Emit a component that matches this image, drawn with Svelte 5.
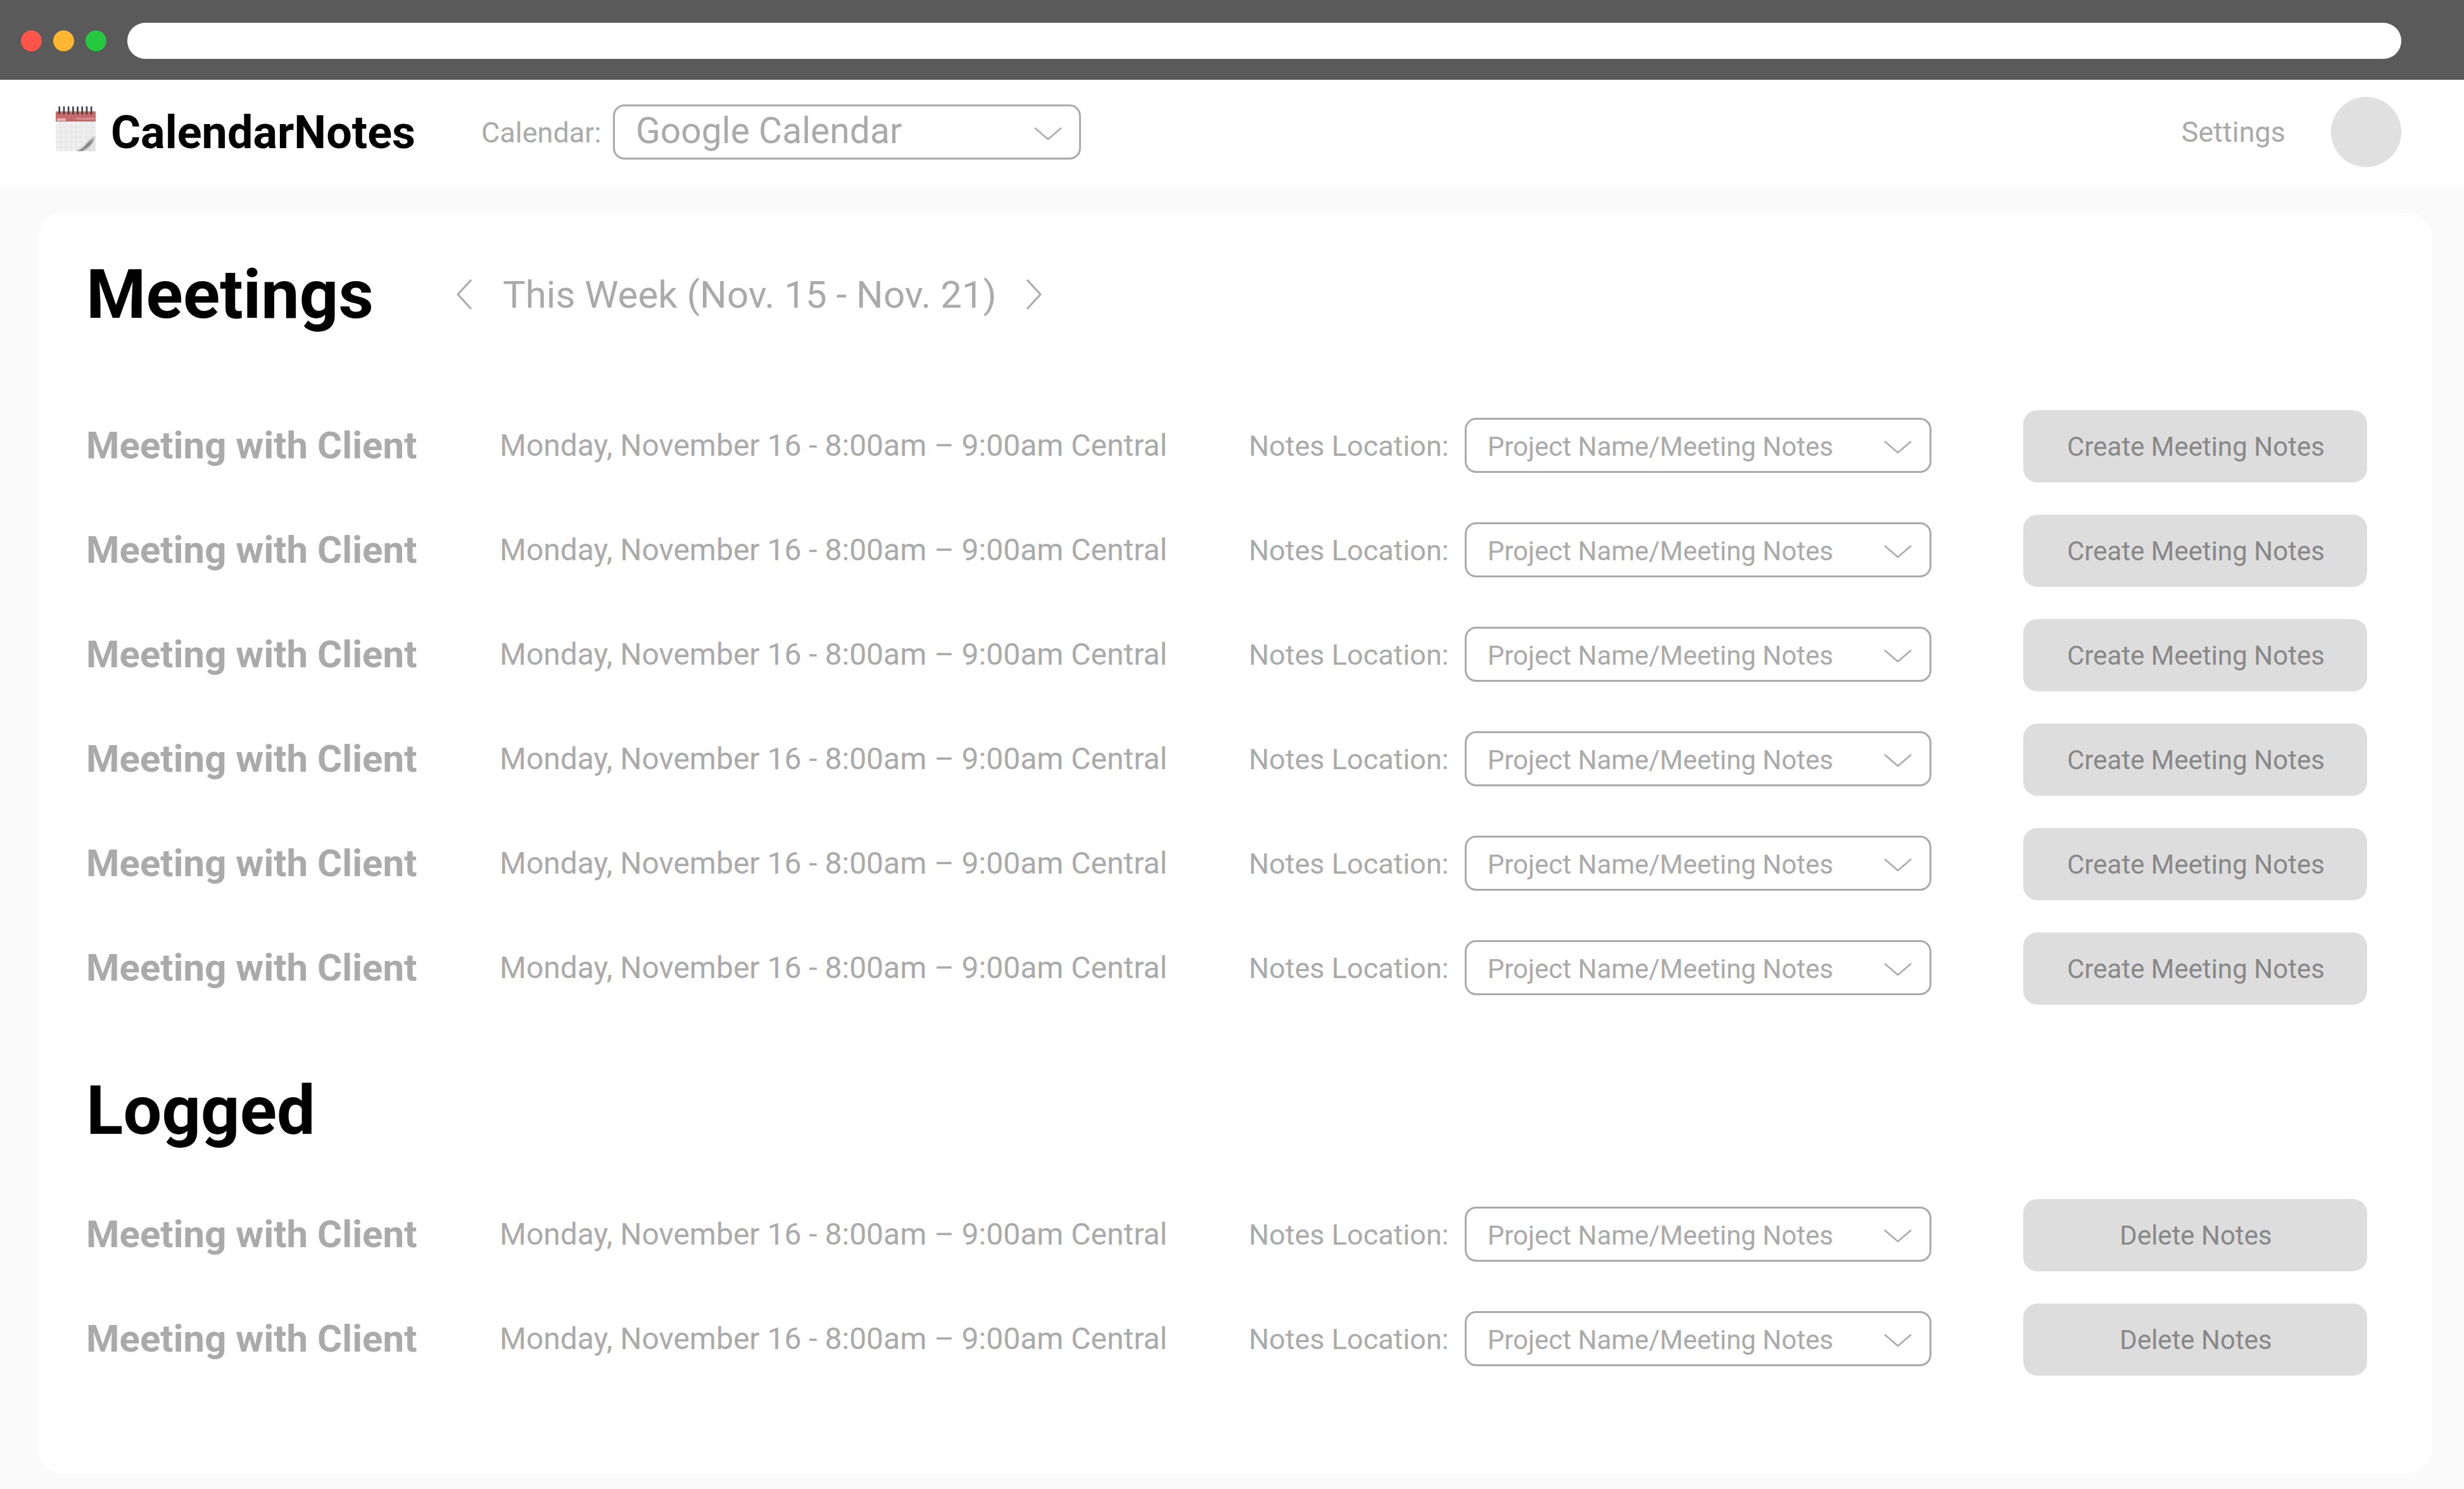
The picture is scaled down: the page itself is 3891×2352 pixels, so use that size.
<script>
  const meetings = Array.from({ length: 6 }, () => 'Create Meeting Notes');
  const logged = Array.from({ length: 2 }, () => 'Delete Notes');
  const rings = [0, 1, 2, 3, 4, 5, 6, 7];
  const gridX = [8, 16, 24, 32, 40, 48, 56];
  const gridY = [32, 40, 48, 56, 64];
</script>

{#snippet chevron(cls)}
  <svg class={cls} viewBox="0 0 44 20" fill="none" aria-hidden="true">
    <path d="M1 1 L22 19 L43 1" />
  </svg>
{/snippet}

{#snippet row(action)}
  <div class="row">
    <div class="name">Meeting with Client</div>
    <div class="when">Monday, November 16 - 8:00am – 9:00am Central</div>
    <div class="loc">Notes Location:</div>
    <div class="picker">
      <span>Project Name/Meeting Notes</span>
      {@render chevron('chev')}
    </div>
    <button class="action">{action}</button>
  </div>
{/snippet}

<div class="page">
  <div class="chrome">
    <i class="dot red"></i>
    <i class="dot yellow"></i>
    <i class="dot green"></i>
    <div class="address"></div>
  </div>

  <header class="top">
    <svg class="logo" viewBox="0 0 63 71" aria-hidden="true">
      <defs>
        <linearGradient id="curl" x1="0.3" y1="0.3" x2="0.75" y2="0.8">
          <stop offset="0" stop-color="#ffffff" />
          <stop offset="0.4" stop-color="#b5b5b5" />
          <stop offset="0.6" stop-color="#6e6e6e" />
          <stop offset="1" stop-color="#d8d8d8" />
        </linearGradient>
        <filter id="soft" x="-10%" y="-10%" width="120%" height="120%">
          <feGaussianBlur stdDeviation="1" />
        </filter>
      </defs>
      <rect x="0" y="24" width="63" height="47" fill="#efefef" />
      {#each gridX as x}<rect {x} y="24" width="1" height="47" fill="#e2e2e2" />{/each}
      {#each gridY as y}<rect x="0" {y} width="63" height="1" fill="#e2e2e2" />{/each}
      <rect x="0" y="8" width="63" height="16" fill="#c76a6a" />
      <rect x="2" y="19" width="14" height="4" fill="#e6b3b3" />
      <rect x="32" y="18" width="30" height="3" fill="#d48c8c" />
      {#each rings as r}
        <rect x={4.5 + r * 7.2} y="0" width="2.6" height="13" rx="1.2" fill="#3c3c3c" />
      {/each}
      <path d="M63 46 L63 71 L30 71 C42 67 46 62 50 56 C54 51 58 48 63 46 Z" fill="#e4e4e4" />
      <path d="M63 47 C56 49 52 54 47 61 C43 66 38 69 32 71 L42 71 C49 68 54 64 57 58 C59 54 61 51 63 47 Z" fill="url(#curl)" filter="url(#soft)" />
    </svg>
    <div class="brand">CalendarNotes</div>
    <label class="cal-label" for="cal">Calendar:</label>
    <div class="cal-picker" id="cal">
      <span>Google Calendar</span>
      {@render chevron('chev')}
    </div>
    <div class="settings">Settings</div>
    <div class="avatar"></div>
  </header>

  <main class="body">
    <section class="card">
      <div class="head">
        <h2>Meetings</h2>
        <svg class="nav" viewBox="0 0 24 48" fill="none" aria-hidden="true"><path d="M23 1 L2 24 L23 47" /></svg>
        <span class="range">This Week (Nov. 15 - Nov. 21)</span>
        <svg class="nav" viewBox="0 0 24 48" fill="none" aria-hidden="true"><path d="M1 1 L22 24 L1 47" /></svg>
      </div>
      <div class="rows">
        {#each meetings as m}{@render row(m)}{/each}
      </div>
      <h2 class="logged">Logged</h2>
      <div class="rows">
        {#each logged as m}{@render row(m)}{/each}
      </div>
    </section>
  </main>
</div>

<style>
  :global(body) {
    margin: 0;
    background: #fafafa;
  }
  .page {
    width: 3891px;
    height: 2352px;
    display: flex;
    flex-direction: column;
    font-family: Roboto, "Liberation Sans", sans-serif;
    color: #aaaaaa;
    background: #fafafa;
    overflow: hidden;
  }
  .chrome {
    height: 126px;
    flex: none;
    background: #5a5a5a;
    display: flex;
    align-items: center;
    padding: 3px 99px 0 33px;
    box-sizing: border-box;
  }
  .dot {
    width: 33px;
    height: 33px;
    border-radius: 50%;
    margin-right: 18px;
    flex: none;
  }
  .red { background: #ff5449; }
  .yellow { background: #ffb731; }
  .green { background: #26c840; }
  .address {
    flex: 1;
    height: 57px;
    margin-left: 15px;
    border-radius: 29px;
    background: #ffffff;
  }
  .top {
    height: 168px;
    flex: none;
    background: #ffffff;
    display: flex;
    align-items: center;
    padding: 0 99px 3px 88px;
    box-sizing: border-box;
  }
  .logo {
    width: 63px;
    height: 71px;
    flex: none;
    margin-top: -10px;
    filter: blur(0.5px);
  }
  .brand {
    margin-left: 24px;
    padding-top: 2px;
    font-size: 72px;
    font-weight: 700;
    color: #000000;
    width: 585px;
    flex: none;
  }
  .cal-label {
    font-size: 45px;
    padding-top: 1px;
    width: 208px;
    flex: none;
  }
  .cal-picker {
    width: 739px;
    height: 87px;
    box-sizing: border-box;
    border: 3px solid #aaaaaa;
    border-radius: 18px;
    display: flex;
    align-items: center;
    justify-content: space-between;
    padding: 0 27px 0 33px;
    font-size: 57px;
    flex: none;
  }
  .cal-picker span {
    padding-bottom: 5px;
  }
  .settings {
    margin-left: auto;
    font-size: 45px;
  }
  .avatar {
    width: 111px;
    height: 111px;
    border-radius: 50%;
    background: #e0e0e0;
    margin-left: 72px;
    flex: none;
  }
  .body {
    flex: 1;
    padding: 42px 51px 24px 60px;
    display: flex;
    min-height: 0;
  }
  .card {
    flex: 1;
    background: #ffffff;
    border-radius: 40px;
    padding: 66px 0 0 76px;
  }
  .head {
    display: flex;
    align-items: center;
    margin-bottom: 120px;
  }
  h2 {
    margin: 0;
    font-size: 108px;
    line-height: 126px;
    font-weight: 700;
    color: #000000;
  }
  .head h2 {
    width: 585px;
  }
  .nav {
    width: 24px;
    height: 48px;
    flex: none;
  }
  .nav path {
    stroke: #aaaaaa;
    stroke-width: 3;
  }
  .range {
    font-size: 60px;
    margin: 0 47px 0 49px;
  }
  .logged {
    margin: 104px 0 77px;
  }
  .rows {
    display: flex;
    flex-direction: column;
    gap: 51px;
  }
  .row {
    display: flex;
    align-items: center;
    height: 114px;
  }
  .name {
    width: 653px;
    flex: none;
    font-size: 60px;
    font-weight: 700;
    padding-bottom: 4px;
  }
  .when {
    width: 1183px;
    flex: none;
    font-size: 48px;
    padding-bottom: 3px;
  }
  .loc {
    width: 341px;
    flex: none;
    font-size: 45px;
    padding-bottom: 2px;
  }
  .picker {
    width: 737px;
    height: 87px;
    margin-bottom: 3px;
    flex: none;
    box-sizing: border-box;
    border: 3px solid #aaaaaa;
    border-radius: 18px;
    display: flex;
    align-items: center;
    justify-content: space-between;
    padding: 0 28px 0 33px;
    font-size: 42px;
  }
  .picker span {
    padding-top: 4px;
  }
  .action {
    width: 543px;
    height: 114px;
    margin-left: 145px;
    flex: none;
    border: 0;
    border-radius: 22px;
    background: #dddddd;
    color: #888888;
    font-family: inherit;
    font-size: 42px;
    padding: 0 0 0 2px;
  }
  .chev {
    width: 44px;
    height: 20px;
    flex: none;
    margin-top: 5px;
  }
  .chev path {
    stroke: #aaaaaa;
    stroke-width: 2.5;
  }
</style>
